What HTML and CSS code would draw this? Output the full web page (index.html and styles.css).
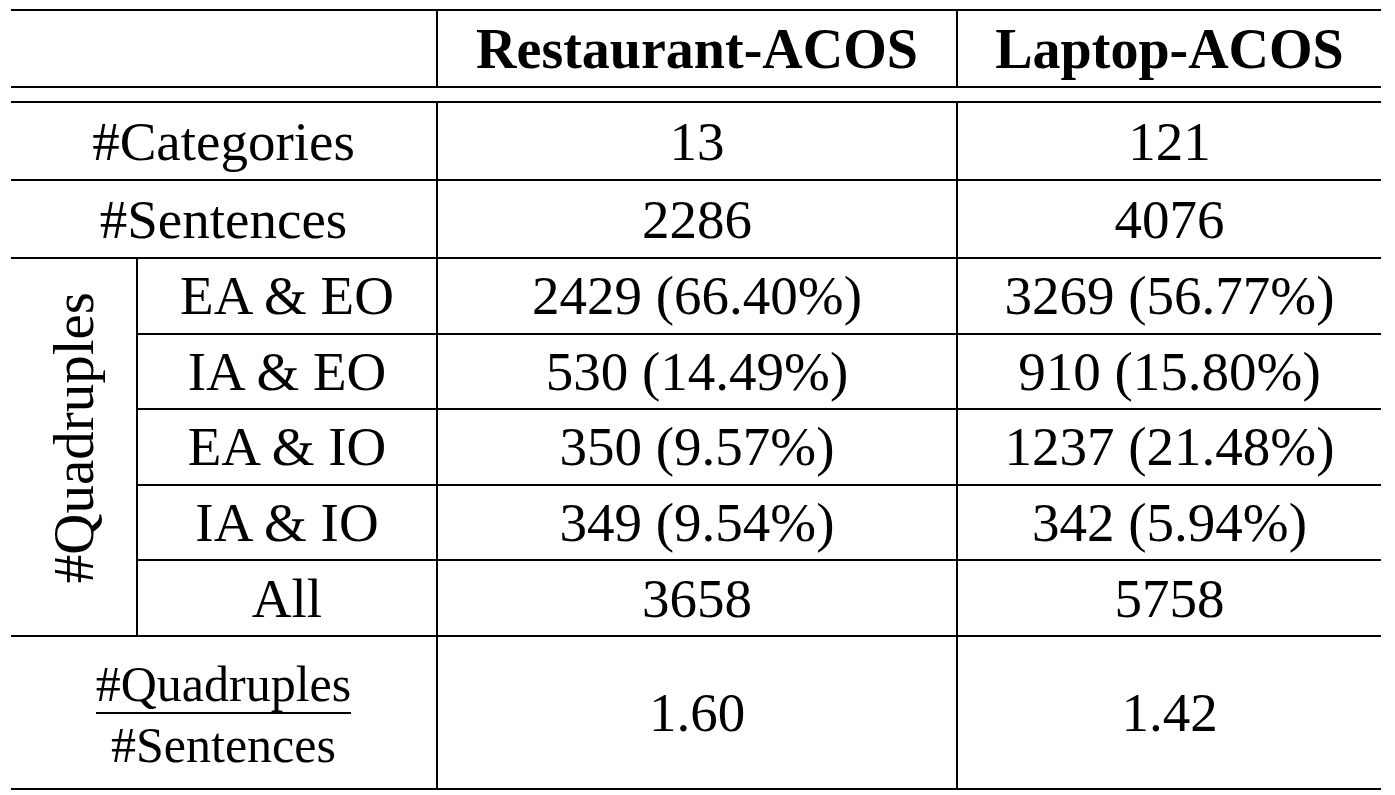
FILE: index.html
```html
<!DOCTYPE html>
<html lang="en">
<head>
  <meta charset="UTF-8" />
  <meta name="viewport" content="width=device-width, initial-scale=1.0"/>
  <title>Dataset Statistics</title>
  <link rel="stylesheet" href="styles.css">
</head>
<body>
  <main class="page">
    <table class="stats">
      <colgroup>
        <col class="col-group">
        <col class="col-label">
        <col class="col-rest">
        <col class="col-laptop">
      </colgroup>
      <thead>
        <tr class="head-row">
          <th colspan="2"></th>
          <th>Restaurant-ACOS</th>
          <th>Laptop-ACOS</th>
        </tr>
      </thead>
      <tbody>
        <tr class="gap"><td colspan="4"></td></tr>
        <tr class="wide">
          <td colspan="2">#Categories</td>
          <td>13</td>
          <td>121</td>
        </tr>
        <tr class="wide">
          <td colspan="2">#Sentences</td>
          <td>2286</td>
          <td>4076</td>
        </tr>
        <tr class="quad">
          <td rowspan="5" class="group"><span class="vertical">#Quadruples</span></td>
          <td>EA &amp; EO</td>
          <td>2429 (66.40%)</td>
          <td>3269 (56.77%)</td>
        </tr>
        <tr class="quad">
          <td>IA &amp; EO</td>
          <td>530 (14.49%)</td>
          <td>910 (15.80%)</td>
        </tr>
        <tr class="quad">
          <td>EA &amp; IO</td>
          <td>350 (9.57%)</td>
          <td>1237 (21.48%)</td>
        </tr>
        <tr class="quad">
          <td>IA &amp; IO</td>
          <td>349 (9.54%)</td>
          <td>342 (5.94%)</td>
        </tr>
        <tr class="quad">
          <td>All</td>
          <td>3658</td>
          <td>5758</td>
        </tr>
        <tr class="ratio">
          <td colspan="2">
            <span class="frac">
              <span class="num">#Quadruples</span>
              <span class="den">#Sentences</span>
            </span>
          </td>
          <td>1.60</td>
          <td>1.42</td>
        </tr>
      </tbody>
    </table>
  </main>
</body>
</html>
```

FILE: styles.css
```css
body {
  margin: 0;
  padding: 0;
  background-color: #fff;
  color: #000;
  font-family: "Liberation Serif", "Times New Roman", serif;
}

.page {
  padding: 9px 0 0 11px;
}

.stats {
  border-collapse: collapse;
  table-layout: fixed;
  width: 1370px;
  font-size: 55px;
  line-height: 1;
}

.col-group { width: 126px; }
.col-label { width: 300px; }
.col-rest { width: 520px; }
.col-laptop { width: 424px; }

th, td {
  border: 2px solid #000;
  padding: 0;
  text-align: center;
  vertical-align: middle;
}

th:first-child, td:first-child {
  border-left: none;
}

th:last-child, td:last-child {
  border-right: none;
}

th {
  font-weight: bold;
  font-size: 56px;
}

.head-row th {
  height: 75px;
}

.gap td {
  height: 13px;
  border-left: none;
  border-right: none;
}

.wide td {
  height: 76px;
}

.quad td {
  height: 73.6px;
}

.ratio td {
  height: 151px;
}

.group {
  border-left: none;
}

.vertical {
  display: inline-block;
  writing-mode: vertical-rl;
  transform: rotate(180deg);
  margin-top: -10px;
  font-size: 57px;
}

.frac {
  display: inline-flex;
  flex-direction: column;
  align-items: center;
  font-size: 50px;
}

.num {
  padding-bottom: 3px;
  border-bottom: 2px solid #000;
}

.den {
  padding-top: 6px;
}
```
